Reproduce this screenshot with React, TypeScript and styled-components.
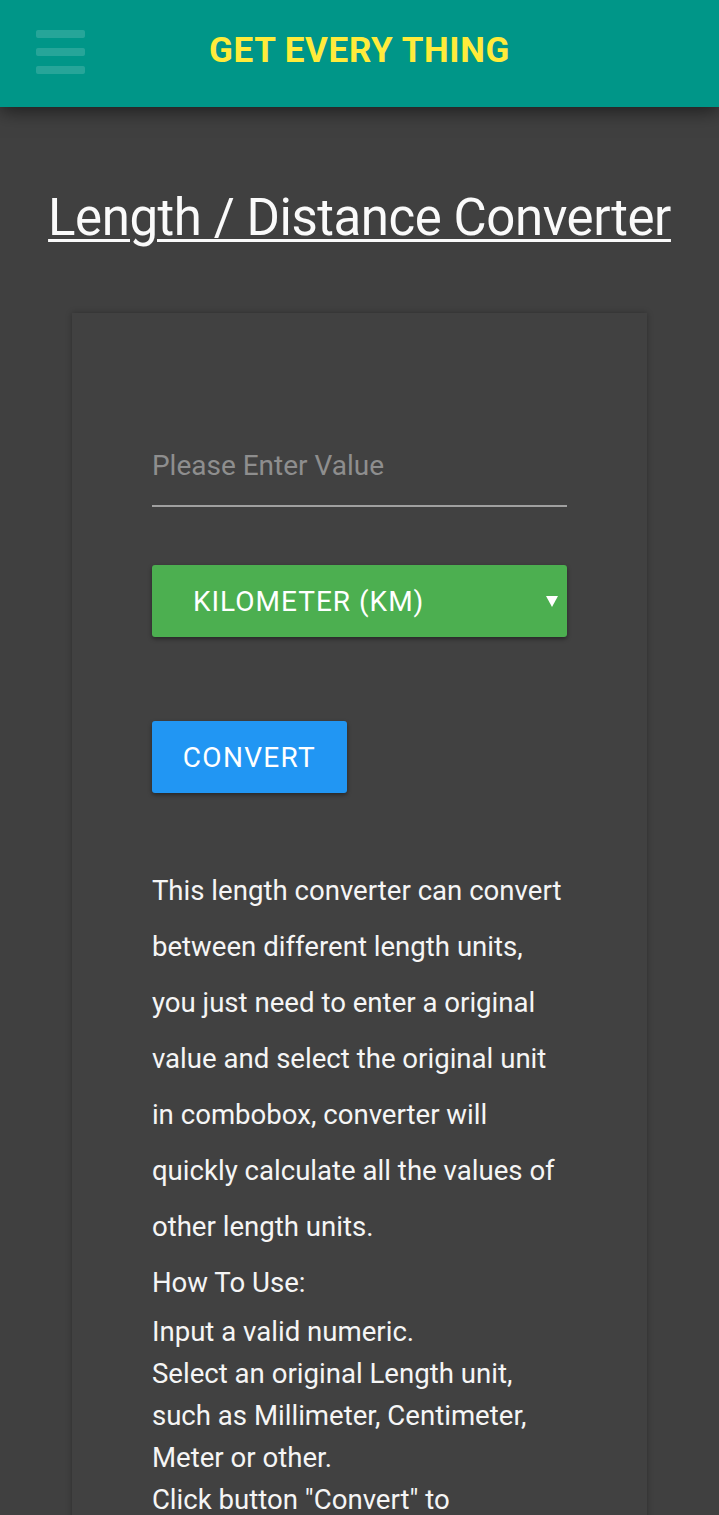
import React from "react";
import styled, { createGlobalStyle } from "styled-components";

const GlobalStyle = createGlobalStyle`
  html, body {
    margin: 0;
    padding: 0;
    background: #404040;
    font-family: Roboto, "Noto Sans", Arial, sans-serif;
  }
  * { box-sizing: border-box; }
`;

const Page = styled.div`
  min-height: 1515px;
  background: #404040;
  overflow: hidden;
`;

const Header = styled.header`
  position: relative;
  z-index: 2;
  height: 107px;
  background: #009688;
  box-shadow: 0 4px 18px rgba(0, 0, 0, 0.55);
  display: grid;
  grid-template-columns: 1fr auto 1fr;
  align-items: start;
`;

const MenuButton = styled.div`
  display: flex;
  flex-direction: column;
  gap: 10.5px;
  width: 49px;
  margin: 30px 0 0 36px;
`;

const MenuBar = styled.span`
  display: block;
  height: 7.5px;
  border-radius: 2px;
  background: rgba(255, 255, 255, 0.15);
`;

const Brand = styled.div`
  margin-top: 33px;
  font-size: 35px;
  line-height: 35px;
  font-weight: 700;
  letter-spacing: 0.6px;
  color: #ffeb3b;
  white-space: nowrap;
`;

const Title = styled.h1`
  margin: 80px 0 0;
  text-align: center;
  font-size: 51px;
  line-height: 62px;
  font-weight: 400;
  letter-spacing: -0.45px;
  color: #fafafa;
  text-decoration: underline;
  text-decoration-thickness: 3px;
  text-underline-offset: 4px;
`;

const Card = styled.main`
  width: 80%;
  margin: 64px auto 0;
  padding: 112px 80px 40px;
  background: #414141;
  box-shadow: 0 0 6px rgba(0, 0, 0, 0.3);
  min-height: 1300px;
`;

const ValueInput = styled.input`
  display: block;
  width: 100%;
  height: 82px;
  padding: 0;
  border: none;
  border-bottom: 2px solid #a0a0a0;
  background: transparent;
  outline: none;
  font-family: inherit;
  font-size: 28px;
  color: #fafafa;
  &::placeholder {
    color: #8e8e8e;
  }
`;

const UnitSelect = styled.div`
  margin-top: 58px;
  height: 72px;
  display: flex;
  align-items: center;
  justify-content: space-between;
  padding: 0 9px 0 41px;
  background: #4caf50;
  border-radius: 3px;
  box-shadow: 0 2px 4px rgba(0, 0, 0, 0.4);
  color: #ffffff;
  font-size: 28px;
  letter-spacing: 1px;
`;

const Arrow = styled.svg`
  width: 12px;
  height: 12px;
  display: block;
`;

const ConvertButton = styled.button`
  display: block;
  margin-top: 84px;
  height: 72px;
  width: 195px;
  padding: 0;
  border: none;
  border-radius: 3px;
  background: #2196f3;
  box-shadow: 0 2px 4px rgba(0, 0, 0, 0.4);
  color: #ffffff;
  font-family: inherit;
  font-size: 28px;
  letter-spacing: 1.3px;
`;

const Description = styled.p`
  margin: 70px 0 0;
  font-size: 27.6px;
  line-height: 56px;
  color: #f5f5f5;
`;

const Steps = styled.div`
  font-size: 27.6px;
  line-height: 42px;
  color: #f5f5f5;
`;

export default function App() {
  return (
    <>
      <GlobalStyle />
      <Page>
        <Header>
          <MenuButton>
            <MenuBar />
            <MenuBar />
            <MenuBar />
          </MenuButton>
          <Brand>GET EVERY THING</Brand>
          <div />
        </Header>
        <Title>Length / Distance Converter</Title>
        <Card>
          <ValueInput placeholder="Please Enter Value" />
          <UnitSelect>
            <span>KILOMETER (KM)</span>
            <Arrow viewBox="0 0 12 12">
              <path d="M0 1 L12 1 L6 12 Z" fill="#ffffff" />
            </Arrow>
          </UnitSelect>
          <ConvertButton>CONVERT</ConvertButton>
          <Description>
            This length converter can convert between different length units,
            you just need to enter a original value and select the original unit
            in combobox, converter will quickly calculate all the values of
            other length units.
            <br />
            How To Use:
          </Description>
          <Steps>
            Input a valid numeric.
            <br />
            Select an original Length unit, such as Millimeter, Centimeter,
            Meter or other.
            <br />
            Click button "Convert" to calculate.
          </Steps>
        </Card>
      </Page>
    </>
  );
}
